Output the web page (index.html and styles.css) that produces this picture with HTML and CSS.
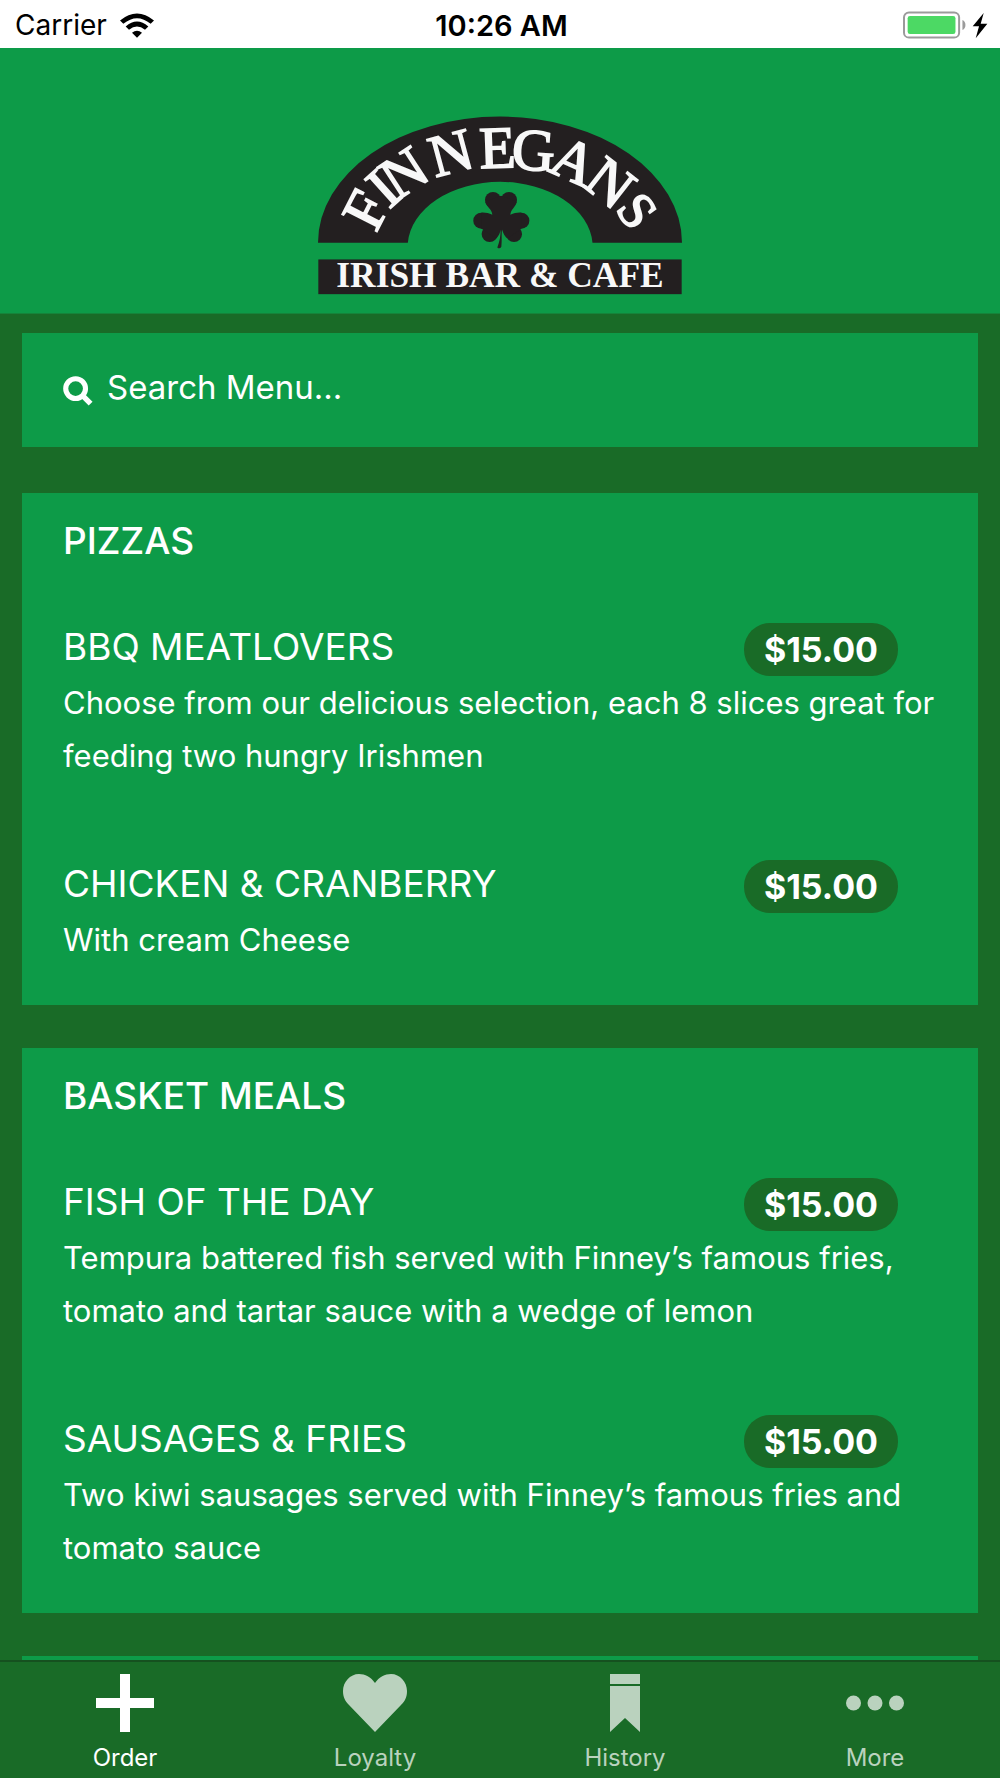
FILE: index.html
```html
<!DOCTYPE html>
<html lang="en">
  <head>
    <meta charset="UTF-8" />
    <meta name="viewport" content="width=device-width, initial-scale=1.0" />
    <title>Finnegans Menu</title>
    <link rel="stylesheet" href="styles.css">
  </head>
  <body>
    <div class="status-bar">
      <div class="status-left">
        <span>Carrier</span>
        <svg class="wifi" viewBox="0 0 102 74" aria-hidden="true">
          <path d="M51 74 L36 59 Q51 46 66 59 Z" />
          <path d="M17 40 Q51 10 85 40 L75 50 Q51 30 27 50 Z" />
          <path d="M0 22 Q51 -20 102 22 L92 32 Q51 -2 10 32 Z" />
        </svg>
      </div>
      <div class="status-time">10:26 AM</div>
      <div class="status-right">
        <svg class="battery" viewBox="0 0 256 84" aria-hidden="true">
          <rect x="3" y="4" width="166" height="76" rx="15" fill="none" stroke="#9b9b9b" stroke-width="6" />
          <rect x="14" y="15" width="144" height="54" rx="7" fill="#4cd964" />
          <path d="M179 27 Q188 31 188 42 Q188 53 179 57 Z" fill="#9b9b9b" />
          <path d="M243 6 L210 46 H229 L219 82 L254 38 H234 Z" fill="#000" />
        </svg>
      </div>
    </div>

    <header class="header">
      <svg class="logo" viewBox="55 49 1090 535" role="img" aria-label="Finnegans Irish Bar &amp; Cafe">
        <path class="logo-dark" d="M55 428 A545 378 0 0 1 1145 428 H877 A277 194 0 0 0 324 428 Z" />
        <text class="logo-name" x="229 268 291 406 540 632 739 843" y="400 329 303 233 205 206 212 256" rotate="-63 -42 -33 -15 -2 4 24 38">FINNEGAN<tspan class="logo-last" x="943" y="328" rotate="54">S</tspan></text>
        <g class="logo-dark">
          <circle cx="579" cy="300" r="24" />
          <circle cx="627" cy="300" r="24" />
          <circle cx="544" cy="362" r="24" />
          <circle cx="569" cy="402" r="24" />
          <circle cx="664" cy="362" r="24" />
          <circle cx="642" cy="402" r="24" />
          <path d="M556 305 C560 322 576 326 577 344 C566 340 556 337 544 338 V386 L549 388 L589 415 C597 406 600 398 602 388 C602 408 599 424 592 442 Q599 448 604 440 C606 422 604 408 606 388 C610 400 614 408 622 415 L661 388 L664 386 V338 C652 337 642 340 631 344 C632 328 646 322 650 305 L603 287 Z" />
        </g>
        <rect class="logo-dark" x="56" y="478" width="1088" height="104" />
        <text class="logo-sub" x="600" y="562" text-anchor="middle">IRISH BAR &amp; CAFE</text>
      </svg>
    </header>

    <main class="content">
      <form class="search">
        <label for="search">
          <svg class="search-icon" viewBox="0 0 88 88" aria-hidden="true">
            <circle cx="37" cy="37" r="29" fill="none" stroke="#fff" stroke-width="15" />
            <path d="M56 56 L81 81" stroke="#fff" stroke-width="16" />
          </svg>
        </label>
        <input type="text" id="search" placeholder="Search Menu..." aria-label="Search Menu" />
      </form>

      <section class="card">
        <h2>PIZZAS</h2>
        <article class="item">
          <div class="item-top">
            <h3>BBQ MEATLOVERS</h3>
            <span class="price">$15.00</span>
          </div>
          <p>Choose from our delicious selection, each 8 slices great for feeding two hungry Irishmen</p>
        </article>
        <article class="item">
          <div class="item-top">
            <h3>CHICKEN &amp; CRANBERRY</h3>
            <span class="price">$15.00</span>
          </div>
          <p>With cream Cheese</p>
        </article>
      </section>

      <section class="card">
        <h2>BASKET MEALS</h2>
        <article class="item">
          <div class="item-top">
            <h3>FISH OF THE DAY</h3>
            <span class="price">$15.00</span>
          </div>
          <p>Tempura battered fish served with Finney’s famous fries, tomato and tartar sauce with a wedge of lemon</p>
        </article>
        <article class="item">
          <div class="item-top">
            <h3>SAUSAGES &amp; FRIES</h3>
            <span class="price">$15.00</span>
          </div>
          <p>Two kiwi sausages served with Finney’s famous fries and tomato sauce</p>
        </article>
      </section>

      <section class="card"></section>
    </main>

    <nav class="tabs">
      <a href="#order" class="tab active">
        <svg viewBox="0 0 58 58" aria-hidden="true"><path d="M24 0h10v24h24v10H34v24H24V34H0V24h24z" /></svg>
        <span>Order</span>
      </a>
      <a href="#loyalty" class="tab">
        <svg class="heart" viewBox="0 0 64 58" aria-hidden="true"><path d="M32 9 C28 3 22 0 16 0 C7 0 0 8 0 17 C0 23 2 27 6 31 L32 58 L58 31 C62 27 64 23 64 17 C64 8 57 0 48 0 C42 0 36 3 32 9 Z" /></svg>
        <span>Loyalty</span>
      </a>
      <a href="#history" class="tab">
        <svg viewBox="0 0 58 58" aria-hidden="true"><path d="M14 0h30v10H14z M14 12h30v46L29 44 14 58z" /></svg>
        <span>History</span>
      </a>
      <a href="#more" class="tab">
        <svg viewBox="0 0 116 116" aria-hidden="true">
          <circle cx="15" cy="58" r="15" />
          <circle cx="58" cy="58" r="15" />
          <circle cx="101" cy="58" r="15" />
        </svg>
        <span>More</span>
      </a>
    </nav>
  </body>
</html>
```
FILE: styles.css
```css
* {
  box-sizing: border-box;
}
body {
  font-family: Inter, "Liberation Sans", sans-serif;
  background: #196b27;
  color: white;
  margin: 0;
  height: 100vh;
  display: flex;
  flex-direction: column;
}
.status-bar {
  flex: none;
  height: 48px;
  padding: 2px 12px 0 15px;
  background: white;
  color: black;
  display: grid;
  grid-template-columns: 1fr auto 1fr;
  align-items: center;
  font-size: 28px;
}
.status-left {
  display: flex;
  align-items: center;
  gap: 13px;
}
.wifi {
  width: 34px;
  height: 25px;
}
.status-time {
  font-size: 29px;
  font-weight: 600;
}
.status-right {
  display: flex;
  justify-content: flex-end;
}
.battery {
  width: 85px;
  height: 28px;
}
.header {
  flex: none;
  background: #0d9b48;
  border-bottom: 1px solid #15843a;
  padding: 68px 0 18px;
  display: flex;
  justify-content: center;
}
.logo {
  width: 364px;
  height: 179px;
  overflow: visible;
}
.logo-dark {
  fill: #231f20;
}
.logo-name,
.logo-sub {
  font-family: "Liberation Serif", serif;
  fill: #f8f8f8;
}
.logo-name {
  font-size: 178px;
  stroke: #f8f8f8;
  stroke-width: 5px;
}
.logo-last {
  font-size: 156px;
}
.logo-sub {
  font-size: 106px;
  font-weight: bold;
}
.content {
  flex: 1;
  min-height: 0;
  overflow-y: auto;
  scrollbar-width: none;
  padding: 19px 22px 0;
}
.search {
  background: #0d9b48;
  height: 114px;
  margin-bottom: 46px;
  padding: 0 41px 6px;
  display: flex;
  align-items: center;
  gap: 14px;
}
.search label {
  padding-top: 8px;
}
.search-icon {
  display: block;
  width: 30px;
  height: 30px;
}
.search input {
  flex: 1;
  min-width: 0;
  padding: 0;
  border: none;
  outline: none;
  background: none;
  color: white;
  font-family: inherit;
  font-size: 33px;
}
.search input::placeholder {
  color: white;
  opacity: 1;
}
.card {
  background: #0d9b48;
  min-height: 114px;
  margin-bottom: 43px;
  padding: 0 41px;
}
.card h2 {
  margin: 0;
  padding: 21px 0 56px;
  font-size: 37px;
  font-weight: 500;
  line-height: 53px;
}
.item {
  padding-bottom: 39px;
}
.item + .item {
  margin-top: 39px;
}
.item-top {
  display: flex;
  justify-content: space-between;
  padding-right: 39px;
}
.item h3 {
  margin: 0;
  font-size: 37px;
  font-weight: 400;
  line-height: 47px;
}
.price {
  background: #196b27;
  border-radius: 26px;
  padding: 0 20px;
  font-size: 34px;
  font-weight: 700;
  line-height: 53px;
}
.item p {
  margin: 0;
  font-size: 31px;
  line-height: 53px;
}
.tabs {
  flex: none;
  display: flex;
  background: #196b27;
  border-top: 2px solid #15511f;
}
.tab {
  flex: 1;
  height: 116px;
  padding-top: 12px;
  display: flex;
  flex-direction: column;
  align-items: center;
  gap: 9px;
  color: #bad2be;
  text-decoration: none;
  font-size: 24px;
  line-height: 34px;
}
.tab.active {
  color: white;
}
.tab svg {
  width: 58px;
  height: 58px;
  fill: currentColor;
}
.tab .heart {
  width: 64px;
}
```
